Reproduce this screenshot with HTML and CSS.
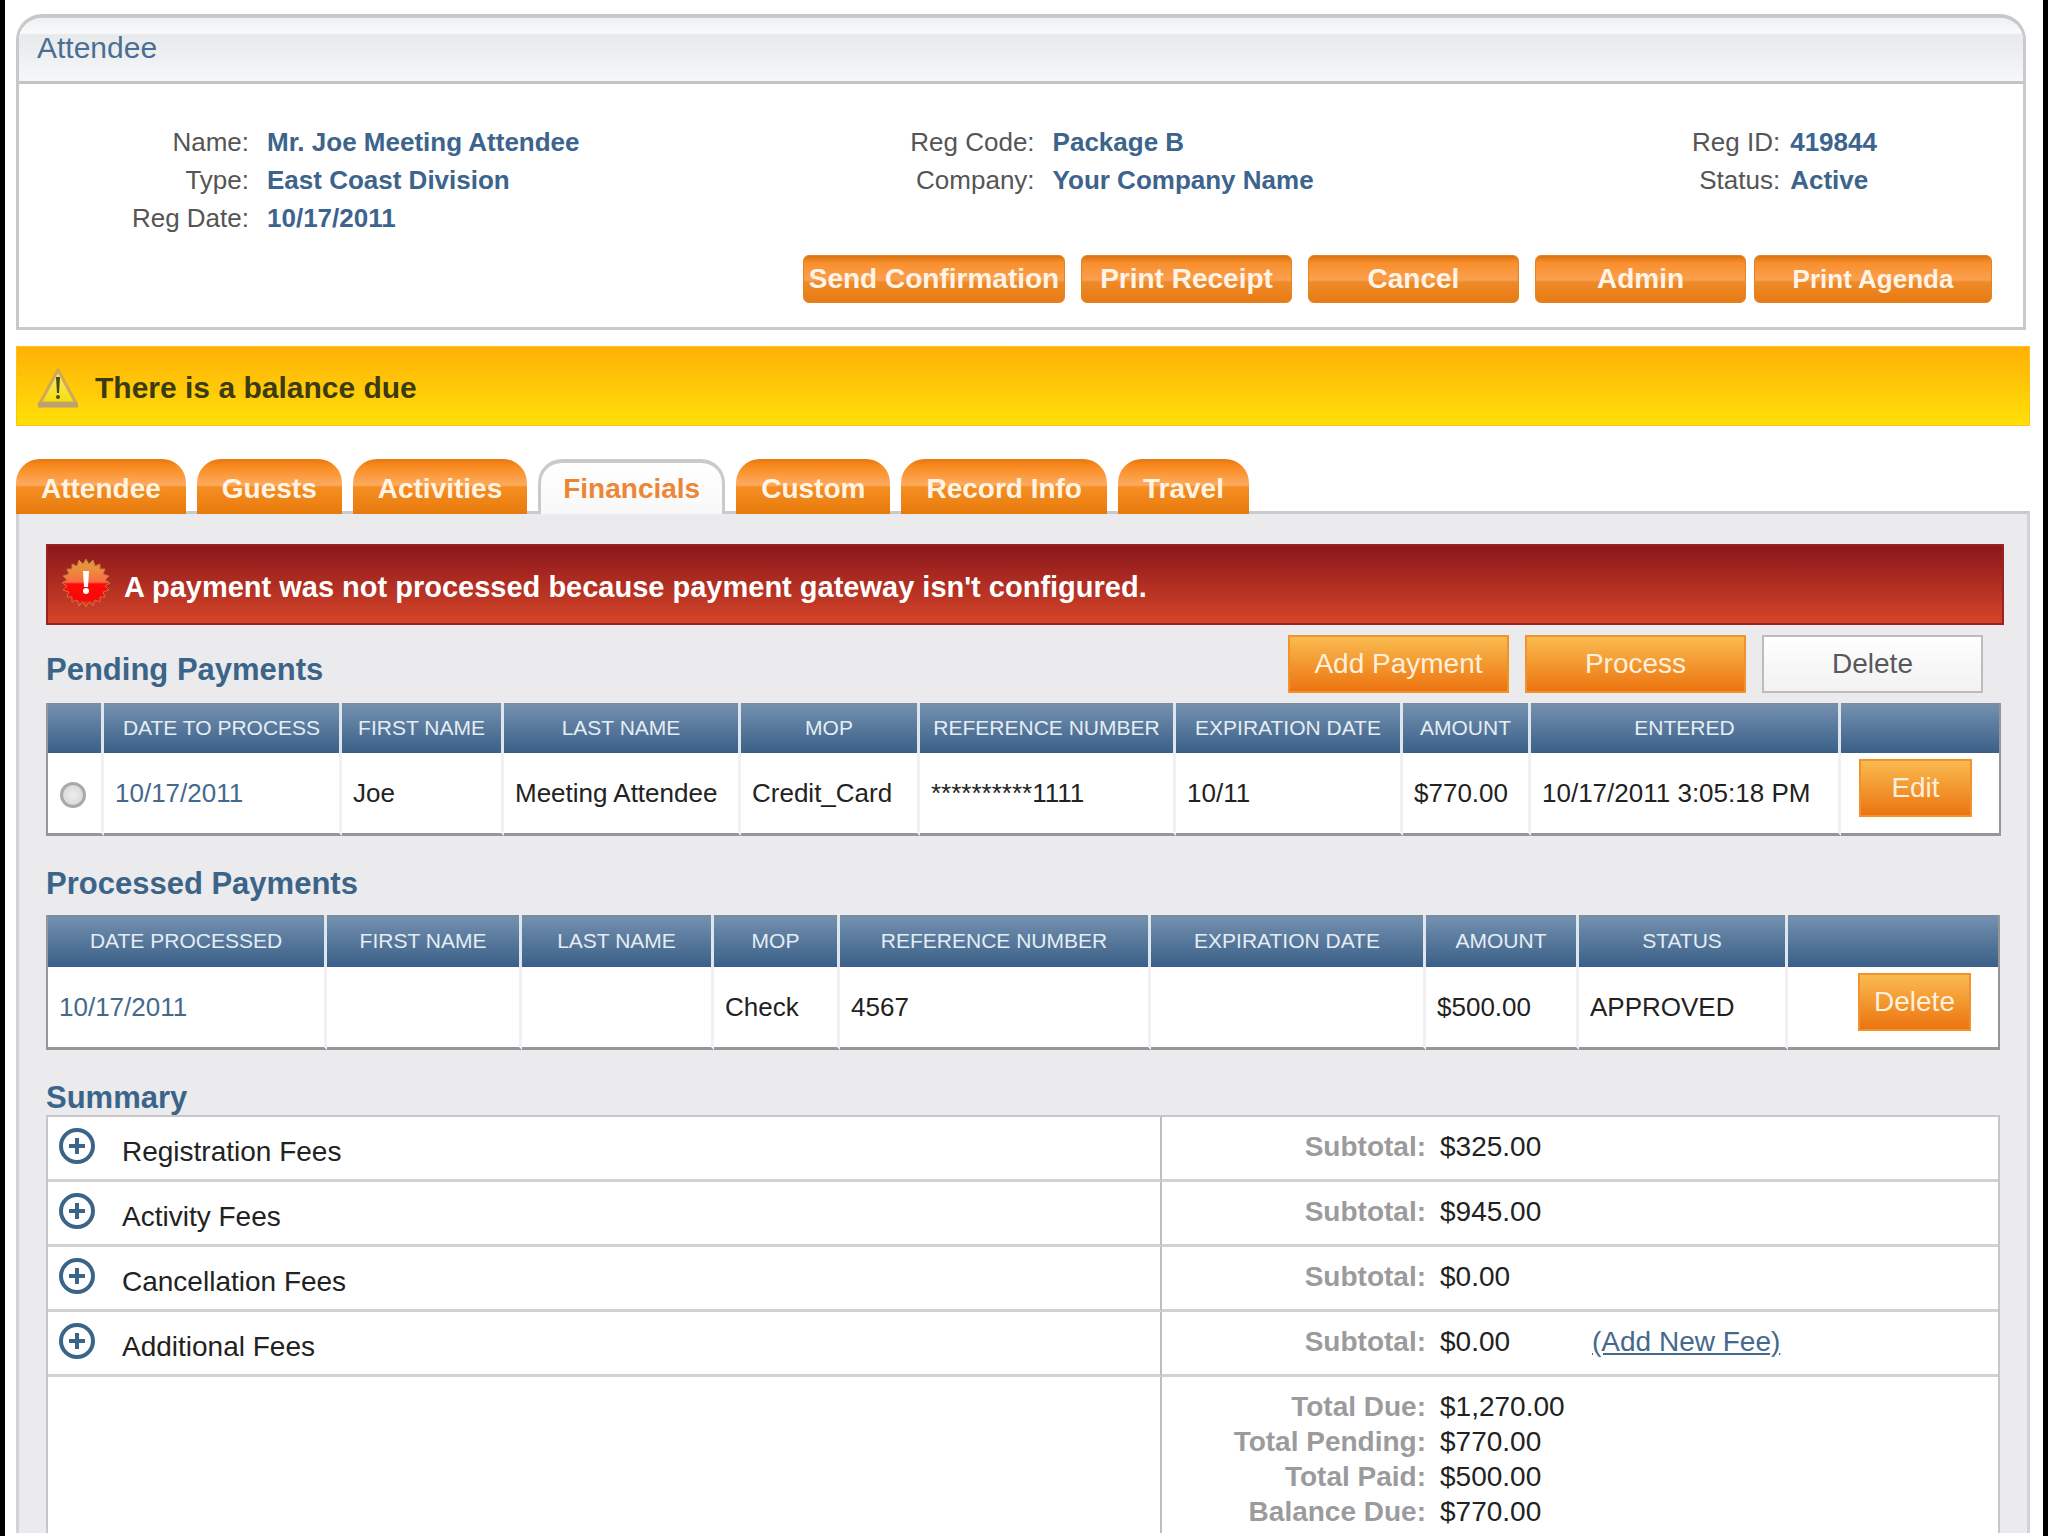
FILE: index.html
```html
<!DOCTYPE html>
<html lang="en">
<head>
  <meta charset="UTF-8" />
  <meta name="viewport" content="width=device-width, initial-scale=1.0"/>
  <title>Attendee - Financials</title>
  <link rel="stylesheet" href="styles.css">
</head>
<body>
  <div class="page">
    <section class="panel">
      <h1 class="panel-title">Attendee</h1>
      <div class="panel-body">
        <div class="details">
          <dl class="detail-list">
            <dt>Name:</dt><dd>Mr. Joe Meeting Attendee</dd>
            <dt>Type:</dt><dd>East Coast Division</dd>
            <dt>Reg Date:</dt><dd>10/17/2011</dd>
          </dl>
          <dl class="detail-list">
            <dt>Reg Code:</dt><dd>Package B</dd>
            <dt>Company:</dt><dd>Your Company Name</dd>
          </dl>
          <dl class="detail-list detail-list-tight">
            <dt>Reg ID:</dt><dd>419844</dd>
            <dt>Status:</dt><dd>Active</dd>
          </dl>
        </div>
        <div class="actions">
          <div class="action-group">
            <button type="button" class="glossy glossy-wide">Send Confirmation</button>
            <button type="button" class="glossy">Print Receipt</button>
            <button type="button" class="glossy">Cancel</button>
            <button type="button" class="glossy">Admin</button>
          </div>
          <button type="button" class="glossy glossy-agenda">Print Agenda</button>
        </div>
      </div>
    </section>

    <div class="alert alert-warning" role="status">
      <svg class="icon-warning" viewBox="0 0 42 42" aria-hidden="true">
        <defs>
          <linearGradient id="warn-fill" x1="0" y1="0" x2="0" y2="1">
            <stop offset="0" stop-color="#f3ec7a"/>
            <stop offset="1" stop-color="#f8dc08"/>
          </linearGradient>
        </defs>
        <path d="M21 3 L39 36 H3 Z" fill="url(#warn-fill)" stroke="#cfa957" stroke-width="3" stroke-linejoin="round"/>
        <path d="M1 38 H41" stroke="#bba070" stroke-width="5"/>
        <path d="M19 10 H23 L22 26 H20 Z" fill="#4b4812"/>
        <circle cx="21" cy="30" r="2" fill="#4b4812"/>
      </svg>
      <span>There is a balance due</span>
    </div>

    <nav class="tabs">
      <a class="tab" href="#attendee">Attendee</a>
      <a class="tab" href="#guests">Guests</a>
      <a class="tab" href="#activities">Activities</a>
      <a class="tab tab-active" href="#financials" aria-current="page">Financials</a>
      <a class="tab" href="#custom">Custom</a>
      <a class="tab" href="#record-info">Record Info</a>
      <a class="tab" href="#travel">Travel</a>
    </nav>

    <main class="content" id="financials">
      <div class="alert alert-error" role="alert">
        <svg class="icon-error" viewBox="0 0 50 50" aria-hidden="true">
          <defs>
            <linearGradient id="burst-fill" x1="0" y1="0" x2="0" y2="1">
              <stop offset="0" stop-color="#d8a03a"/>
              <stop offset="0.25" stop-color="#ee8a3c"/>
              <stop offset="0.48" stop-color="#fa6a44"/>
              <stop offset="0.52" stop-color="#ff0a08"/>
              <stop offset="0.85" stop-color="#f80808"/>
              <stop offset="1" stop-color="#c86a50"/>
            </linearGradient>
          </defs>
          <polygon fill="url(#burst-fill)" stroke="#c9733f" stroke-width="1" points="49,25 44,28 48,32 42,34 44,39 39,39 39,44 34,42 32,48 28,44 25,49 22,44 18,48 16,42 11,44 11,39 6,39 8,34 2,32 6,28 1,25 6,22 2,18 8,16 6,11 11,11 11,6 16,8 18,2 22,6 25,1 28,6 32,2 34,8 39,6 39,11 44,11 42,16 48,18 44,22"/>
          <path d="M22 13 H28 L27 29 H23 Z" fill="#fff"/>
          <circle cx="25" cy="33" r="3" fill="#fff"/>
        </svg>
        <span class="alert-text">A payment was not processed because payment gateway isn't configured.</span>
      </div>

      <section class="block">
        <div class="block-head">
          <h2>Pending Payments</h2>
          <div class="block-actions">
            <button type="button" class="btn btn-orange">Add Payment</button>
            <button type="button" class="btn btn-orange">Process</button>
            <button type="button" class="btn btn-plain">Delete</button>
          </div>
        </div>
        <table class="grid grid-pending">
          <colgroup>
            <col class="p-select"><col class="p-date"><col class="p-first"><col class="p-last"><col class="p-mop">
            <col class="p-ref"><col class="p-exp"><col class="p-amount"><col class="p-entered"><col class="p-action">
          </colgroup>
          <thead>
            <tr>
              <th></th>
              <th>DATE TO PROCESS</th>
              <th>FIRST NAME</th>
              <th>LAST NAME</th>
              <th>MOP</th>
              <th>REFERENCE NUMBER</th>
              <th>EXPIRATION DATE</th>
              <th>AMOUNT</th>
              <th>ENTERED</th>
              <th></th>
            </tr>
          </thead>
          <tbody>
            <tr>
              <td class="cell-select"><input type="radio" name="pending" class="radio" aria-label="Select payment of 10/17/2011"></td>
              <td><a href="#payment" class="date-link">10/17/2011</a></td>
              <td>Joe</td>
              <td>Meeting Attendee</td>
              <td>Credit_Card</td>
              <td>**********1111</td>
              <td>10/11</td>
              <td>$770.00</td>
              <td>10/17/2011 3:05:18 PM</td>
              <td class="cell-action"><button type="button" class="btn btn-orange btn-small">Edit</button></td>
            </tr>
          </tbody>
        </table>
      </section>

      <section class="block">
        <h2 class="block-title">Processed Payments</h2>
        <table class="grid">
          <colgroup>
            <col class="d-date"><col class="d-first"><col class="d-last"><col class="d-mop"><col class="d-ref">
            <col class="d-exp"><col class="d-amount"><col class="d-status"><col class="d-action">
          </colgroup>
          <thead>
            <tr>
              <th>DATE PROCESSED</th>
              <th>FIRST NAME</th>
              <th>LAST NAME</th>
              <th>MOP</th>
              <th>REFERENCE NUMBER</th>
              <th>EXPIRATION DATE</th>
              <th>AMOUNT</th>
              <th>STATUS</th>
              <th></th>
            </tr>
          </thead>
          <tbody>
            <tr>
              <td><a href="#processed" class="date-link">10/17/2011</a></td>
              <td></td>
              <td></td>
              <td>Check</td>
              <td>4567</td>
              <td></td>
              <td>$500.00</td>
              <td>APPROVED</td>
              <td class="cell-action"><button type="button" class="btn btn-orange btn-small">Delete</button></td>
            </tr>
          </tbody>
        </table>
      </section>

      <section class="block">
        <h2 class="block-title block-title-flush">Summary</h2>
        <table class="summary">
          <colgroup>
            <col class="s-fee"><col class="s-amount">
          </colgroup>
          <tbody>
            <tr>
              <td class="fee">
                <div class="fee-row">
                  <button type="button" class="expand" aria-label="Expand registration fees"><svg viewBox="0 0 36 36"><circle cx="18" cy="18" r="16"/><path d="M18 10 V26 M10 18 H26"/></svg></button>
                  <span class="fee-name">Registration Fees</span>
                </div>
              </td>
              <td><div class="amounts"><span class="amount-label">Subtotal:</span><span>$325.00</span></div></td>
            </tr>
            <tr>
              <td class="fee">
                <div class="fee-row">
                  <button type="button" class="expand" aria-label="Expand activity fees"><svg viewBox="0 0 36 36"><circle cx="18" cy="18" r="16"/><path d="M18 10 V26 M10 18 H26"/></svg></button>
                  <span class="fee-name">Activity Fees</span>
                </div>
              </td>
              <td><div class="amounts"><span class="amount-label">Subtotal:</span><span>$945.00</span></div></td>
            </tr>
            <tr>
              <td class="fee">
                <div class="fee-row">
                  <button type="button" class="expand" aria-label="Expand cancellation fees"><svg viewBox="0 0 36 36"><circle cx="18" cy="18" r="16"/><path d="M18 10 V26 M10 18 H26"/></svg></button>
                  <span class="fee-name">Cancellation Fees</span>
                </div>
              </td>
              <td><div class="amounts"><span class="amount-label">Subtotal:</span><span>$0.00</span></div></td>
            </tr>
            <tr>
              <td class="fee">
                <div class="fee-row">
                  <button type="button" class="expand" aria-label="Expand additional fees"><svg viewBox="0 0 36 36"><circle cx="18" cy="18" r="16"/><path d="M18 10 V26 M10 18 H26"/></svg></button>
                  <span class="fee-name">Additional Fees</span>
                </div>
              </td>
              <td><div class="amounts"><span class="amount-label">Subtotal:</span><span>$0.00</span><a href="#new-fee" class="add-fee">(Add New Fee)</a></div></td>
            </tr>
            <tr class="totals">
              <td class="fee"></td>
              <td>
                <div class="amounts"><span class="amount-label">Total Due:</span><span>$1,270.00</span></div>
                <div class="amounts"><span class="amount-label">Total Pending:</span><span>$770.00</span></div>
                <div class="amounts"><span class="amount-label">Total Paid:</span><span>$500.00</span></div>
                <div class="amounts"><span class="amount-label">Balance Due:</span><span>$770.00</span></div>
              </td>
            </tr>
          </tbody>
        </table>
      </section>
    </main>
  </div>
</body>
</html>
```
FILE: styles.css
```css
* {
  box-sizing: border-box;
}

body {
  margin: 0;
  background: #fff;
  color: #222;
  font-family: "Liberation Sans", Arial, sans-serif;
  font-size: 26px;
}

h1, h2, dl, dd {
  margin: 0;
}

button {
  font-family: inherit;
  cursor: pointer;
}

.page {
  min-height: 100vh;
  padding: 14px 13px 2px 11px;
  border: solid #000;
  border-width: 0 5px;
}

/* attendee panel */
.panel {
  margin-right: 4px;
  border: 3px solid #c9c9cd;
  border-top: 4px solid #c6c8ca;
  border-radius: 26px 26px 0 0;
  overflow: hidden;
}

.panel-title {
  padding: 0 18px 3px;
  border-bottom: 3px solid #c2c4c7;
  background: linear-gradient(#eef0f2 0, #f8f9fa 15px, #e8e9eb 17px, #f6f7f9 100%);
  color: #4a6f94;
  font-size: 30px;
  font-weight: normal;
  line-height: 60px;
}

.panel-body {
  padding: 39px 31px 24px 14px;
}

.details {
  display: grid;
  grid-template-columns: 786fr 746fr 428fr;
}

.detail-list {
  display: grid;
  grid-template-columns: 216px 1fr;
  grid-auto-rows: 38px;
  column-gap: 18px;
  line-height: 38px;
  white-space: nowrap;
}

.detail-list-tight {
  column-gap: 10px;
}

.detail-list dt {
  color: #555;
  text-align: right;
}

.detail-list dd {
  color: #3c648c;
  font-weight: bold;
}

.actions {
  display: flex;
  justify-content: flex-end;
  gap: 8px;
  margin-top: 18px;
}

.action-group {
  display: flex;
  gap: 16px;
}

.glossy {
  width: 211px;
  height: 48px;
  padding: 0;
  border: 1px solid #df8526;
  border-radius: 6px;
  background: linear-gradient(#d9730f 0, #f98f2d 7px, #f9a050 24px, #ee8a28 26px, #e87b14 100%);
  color: #fff4e6;
  font-size: 28px;
  font-weight: bold;
}

.glossy-wide {
  width: 262px;
}

.glossy-agenda {
  width: 238px;
  font-size: 26px;
}

/* messages */
.alert {
  display: flex;
  align-items: center;
  font-weight: bold;
}

.alert-warning {
  gap: 16px;
  height: 80px;
  margin-top: 16px;
  padding: 4px 20px 0;
  border: 1px solid #ffc40a;
  background: linear-gradient(#ffb007, #ffe008);
  color: #3c3a12;
  font-size: 30px;
}

.icon-warning {
  width: 42px;
  height: 42px;
}

.alert-error {
  gap: 13px;
  height: 81px;
  padding: 0 13px 3px;
  border: 2px solid #9a2222;
  background: linear-gradient(#8b171c, #d54528);
  color: #fff;
  font-size: 29px;
}

.alert-text {
  padding-top: 8px;
}

.icon-error {
  width: 50px;
  height: 50px;
}

/* tabs */
.tabs {
  display: flex;
  gap: 11px;
  position: relative;
  margin: 33px 0 -3px;
}

.tab {
  height: 55px;
  padding: 4px 25px 0;
  border-radius: 24px 24px 0 0;
  background: linear-gradient(#e8780f 0, #f98c22 8px, #fdab60 26px, #f58e22 28px, #e87a0c 100%);
  color: #fff4e6;
  font-size: 28px;
  font-weight: bold;
  line-height: 52px;
  text-decoration: none;
}

.tab-active {
  padding: 0 22px;
  border: 3px solid #c9cacc;
  border-top-width: 4px;
  border-bottom: 0;
  background: linear-gradient(#fff, #f8f8f9);
  color: #ec8634;
}

.content {
  padding: 30px 23px 0 27px;
  border: 3px solid #d4d2d6;
  border-top-color: #c9cacc;
  border-bottom: 0;
  background: #ebeaec;
}

/* payment blocks */
.block {
  margin-right: 5px;
}

.block-head {
  display: flex;
  justify-content: space-between;
  align-items: flex-end;
  padding: 10px 16px 10px 0;
}

h2 {
  color: #3b6489;
  font-size: 31px;
  line-height: 46px;
}

.block-title {
  margin: 31px 0 14px;
  line-height: 34px;
}

.block-title-flush {
  margin-bottom: 0;
}

.block-actions {
  display: flex;
  gap: 16px;
}

.btn {
  width: 221px;
  height: 58px;
  padding: 0;
  font-size: 28px;
}

.btn-orange {
  border: 2px solid #f1922c;
  background: linear-gradient(#fabb50, #ec7410);
  color: #fff0dc;
}

.btn-plain {
  border: 2px solid #bcbcbe;
  background: linear-gradient(#fff, #f2f1f3);
  color: #58585a;
}

.btn-small {
  width: 113px;
}

.grid {
  width: 100%;
  border: 2px solid #969698;
  border-width: 0 2px;
  border-spacing: 0;
  background: #fff;
  table-layout: fixed;
  white-space: nowrap;
}

.grid thead th {
  height: 52px;
  padding: 0;
  border-right: 3px solid #dfe5ec;
  background: linear-gradient(#7d8c9c 0, #728fae 3px, #3a5f87 100%);
  color: #e4edf5;
  font-size: 21px;
  font-weight: normal;
}

.grid-pending thead th {
  height: 50px;
}

.grid td {
  height: 83px;
  padding: 0 11px;
  border-right: 3px solid #f3f0f5;
  border-bottom: 3px solid #969698;
}

.grid th:last-child,
.grid td:last-child {
  border-right: 0;
}

.grid .cell-select {
  padding: 0 4px 0 0;
  text-align: center;
}

.grid .cell-action {
  padding: 6px 27px 0 0;
  text-align: right;
  vertical-align: top;
}

.date-link {
  color: #45698c;
  text-decoration: none;
}

.radio {
  width: 26px;
  height: 26px;
  margin: 0;
  border: 3px solid #a9a9a9;
  border-radius: 50%;
  background: radial-gradient(#eee, #d2d2d2);
  appearance: none;
  vertical-align: middle;
}

.radio:checked {
  background: radial-gradient(#3b6489 40%, #e4e4e4 45%);
}

.p-select { width: 56px; }
.p-date { width: 238px; }
.p-first { width: 162px; }
.p-last { width: 237px; }
.p-mop { width: 179px; }
.p-ref { width: 256px; }
.p-exp { width: 227px; }
.p-amount { width: 128px; }
.p-entered { width: 310px; }
.p-action { width: 158px; }

.d-date { width: 279px; }
.d-first { width: 195px; }
.d-last { width: 192px; }
.d-mop { width: 126px; }
.d-ref { width: 311px; }
.d-exp { width: 275px; }
.d-amount { width: 153px; }
.d-status { width: 209px; }
.d-action { width: 210px; }

/* summary */
.summary {
  width: 100%;
  border: 2px solid #c8c6ca;
  border-bottom: 0;
  border-spacing: 0;
  background: #fff;
  table-layout: fixed;
  font-size: 28px;
  line-height: 35px;
}

.s-fee { width: 1114px; }
.s-amount { width: 836px; }

.summary td {
  height: 65px;
  padding: 12px 0 0;
  border-bottom: 3px solid #d3d1d5;
  vertical-align: top;
}

.summary .fee {
  padding-top: 11px;
  border-right: 2px solid #bfbdc1;
}

.summary .totals td {
  height: 156px;
  border-bottom: 0;
}

.fee-row {
  display: flex;
  gap: 27px;
  padding-left: 11px;
}

.fee-name {
  padding-top: 6px;
}

.expand {
  width: 36px;
  height: 36px;
  padding: 0;
  border: 0;
  background: none;
}

.expand svg {
  display: block;
  fill: none;
  stroke: #3b6489;
  stroke-width: 4;
}

.amounts {
  display: grid;
  grid-template-columns: 264px 138px 1fr;
  column-gap: 14px;
}

.amount-label {
  color: #9b9b9d;
  font-weight: bold;
  text-align: right;
}

.add-fee {
  color: #45698c;
}
```
